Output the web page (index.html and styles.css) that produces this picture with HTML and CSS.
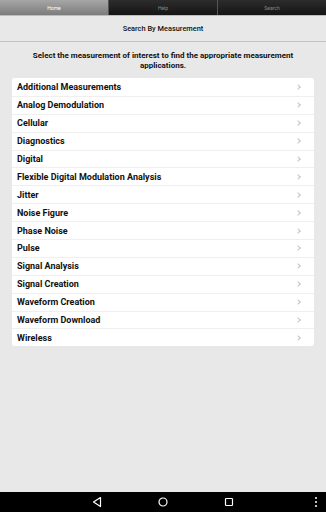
FILE: index.html
```html
<!DOCTYPE html>
<html lang="en">
<head>
    <meta charset="UTF-8">
    <meta name="viewport" content="width=device-width, initial-scale=1.0">
    <title>Search By Measurement</title>
    <link rel="stylesheet" href="styles.css">
</head>
<body>
    <div class="tabs">
        <div class="tab active">Home</div>
        <div class="tab">Help</div>
        <div class="tab">Search</div>
    </div>

    <div class="title">Search By Measurement</div>

    <main class="content">
        <p class="intro">Select the measurement of interest to find the appropriate measurement applications.</p>

        <ul class="list">
            <li>Additional Measurements</li>
            <li>Analog Demodulation</li>
            <li>Cellular</li>
            <li>Diagnostics</li>
            <li>Digital</li>
            <li>Flexible Digital Modulation Analysis</li>
            <li>Jitter</li>
            <li>Noise Figure</li>
            <li>Phase Noise</li>
            <li>Pulse</li>
            <li>Signal Analysis</li>
            <li>Signal Creation</li>
            <li>Waveform Creation</li>
            <li>Waveform Download</li>
            <li>Wireless</li>
        </ul>
    </main>

    <div class="navbar">
        <svg width="12" height="12" viewBox="0 0 12 12"><path d="M9.5 1.5 L2.5 6 L9.5 10.5 Z" fill="none" stroke="#fff" stroke-width="1.2" stroke-linejoin="round"/></svg>
        <svg width="12" height="12" viewBox="0 0 12 12"><circle cx="6" cy="6" r="4" fill="none" stroke="#fff" stroke-width="1.2"/></svg>
        <svg width="12" height="12" viewBox="0 0 12 12"><rect x="2.5" y="2.5" width="7" height="7" rx="0.8" fill="none" stroke="#fff" stroke-width="1.2"/></svg>
        <svg class="more" width="4" height="12" viewBox="0 0 4 12"><circle cx="2" cy="2" r="1" fill="#fff"/><circle cx="2" cy="6" r="1" fill="#fff"/><circle cx="2" cy="10" r="1" fill="#fff"/></svg>
    </div>
</body>
</html>
```

FILE: styles.css
```css
html, body {
    height: 100%;
}
body {
    margin: 0;
    font-family: Roboto, "Liberation Sans", sans-serif;
    background-color: #e8e8e8;
    color: #111;
    display: flex;
    flex-direction: column;
}
.tabs {
    display: flex;
    height: 15px;
    border-bottom: 1px solid #bdbdbd;
    background-color: #111;
}
.tab {
    flex: 1;
    display: flex;
    align-items: center;
    justify-content: center;
    font-size: 5px;
    color: #8a8a8a;
    background: linear-gradient(#2c2c2c, #151515);
    border-left: 1px solid #555;
}
.tab.active {
    color: #fff;
    background: linear-gradient(#a6a6a6, #7c7c7c);
    border-left: none;
}
.title {
    height: 25px;
    display: flex;
    align-items: center;
    justify-content: center;
    font-size: 7.4px;
    font-weight: 500;
    border-bottom: 1px solid #c4c4c4;
}
.content {
    flex: 1;
    padding: 0 12px 0 12px;
}
.intro {
    margin: 9px 6px 8px 6px;
    text-align: center;
    font-size: 8px;
    font-weight: bold;
    line-height: 9.5px;
}
.list {
    list-style: none;
    margin: 0;
    padding: 0;
    background-color: #fff;
    border-radius: 3px;
}
.list li {
    height: 17.9px;
    display: flex;
    align-items: center;
    justify-content: space-between;
    padding: 0 14px 0 5px;
    font-size: 9px;
    font-weight: bold;
    border-top: 1px solid #efefef;
    box-sizing: border-box;
}
.list li:first-child {
    border-top: none;
}
.list li::after {
    content: "";
    width: 3px;
    height: 3px;
    border-top: 1px solid #c4c4c4;
    border-right: 1px solid #c4c4c4;
    transform: rotate(45deg);
}
.navbar {
    height: 20px;
    background-color: #000;
    display: flex;
    align-items: center;
    padding: 0 8px 0 91px;
    gap: 54px;
}
.navbar .more {
    margin-left: auto;
}
```
